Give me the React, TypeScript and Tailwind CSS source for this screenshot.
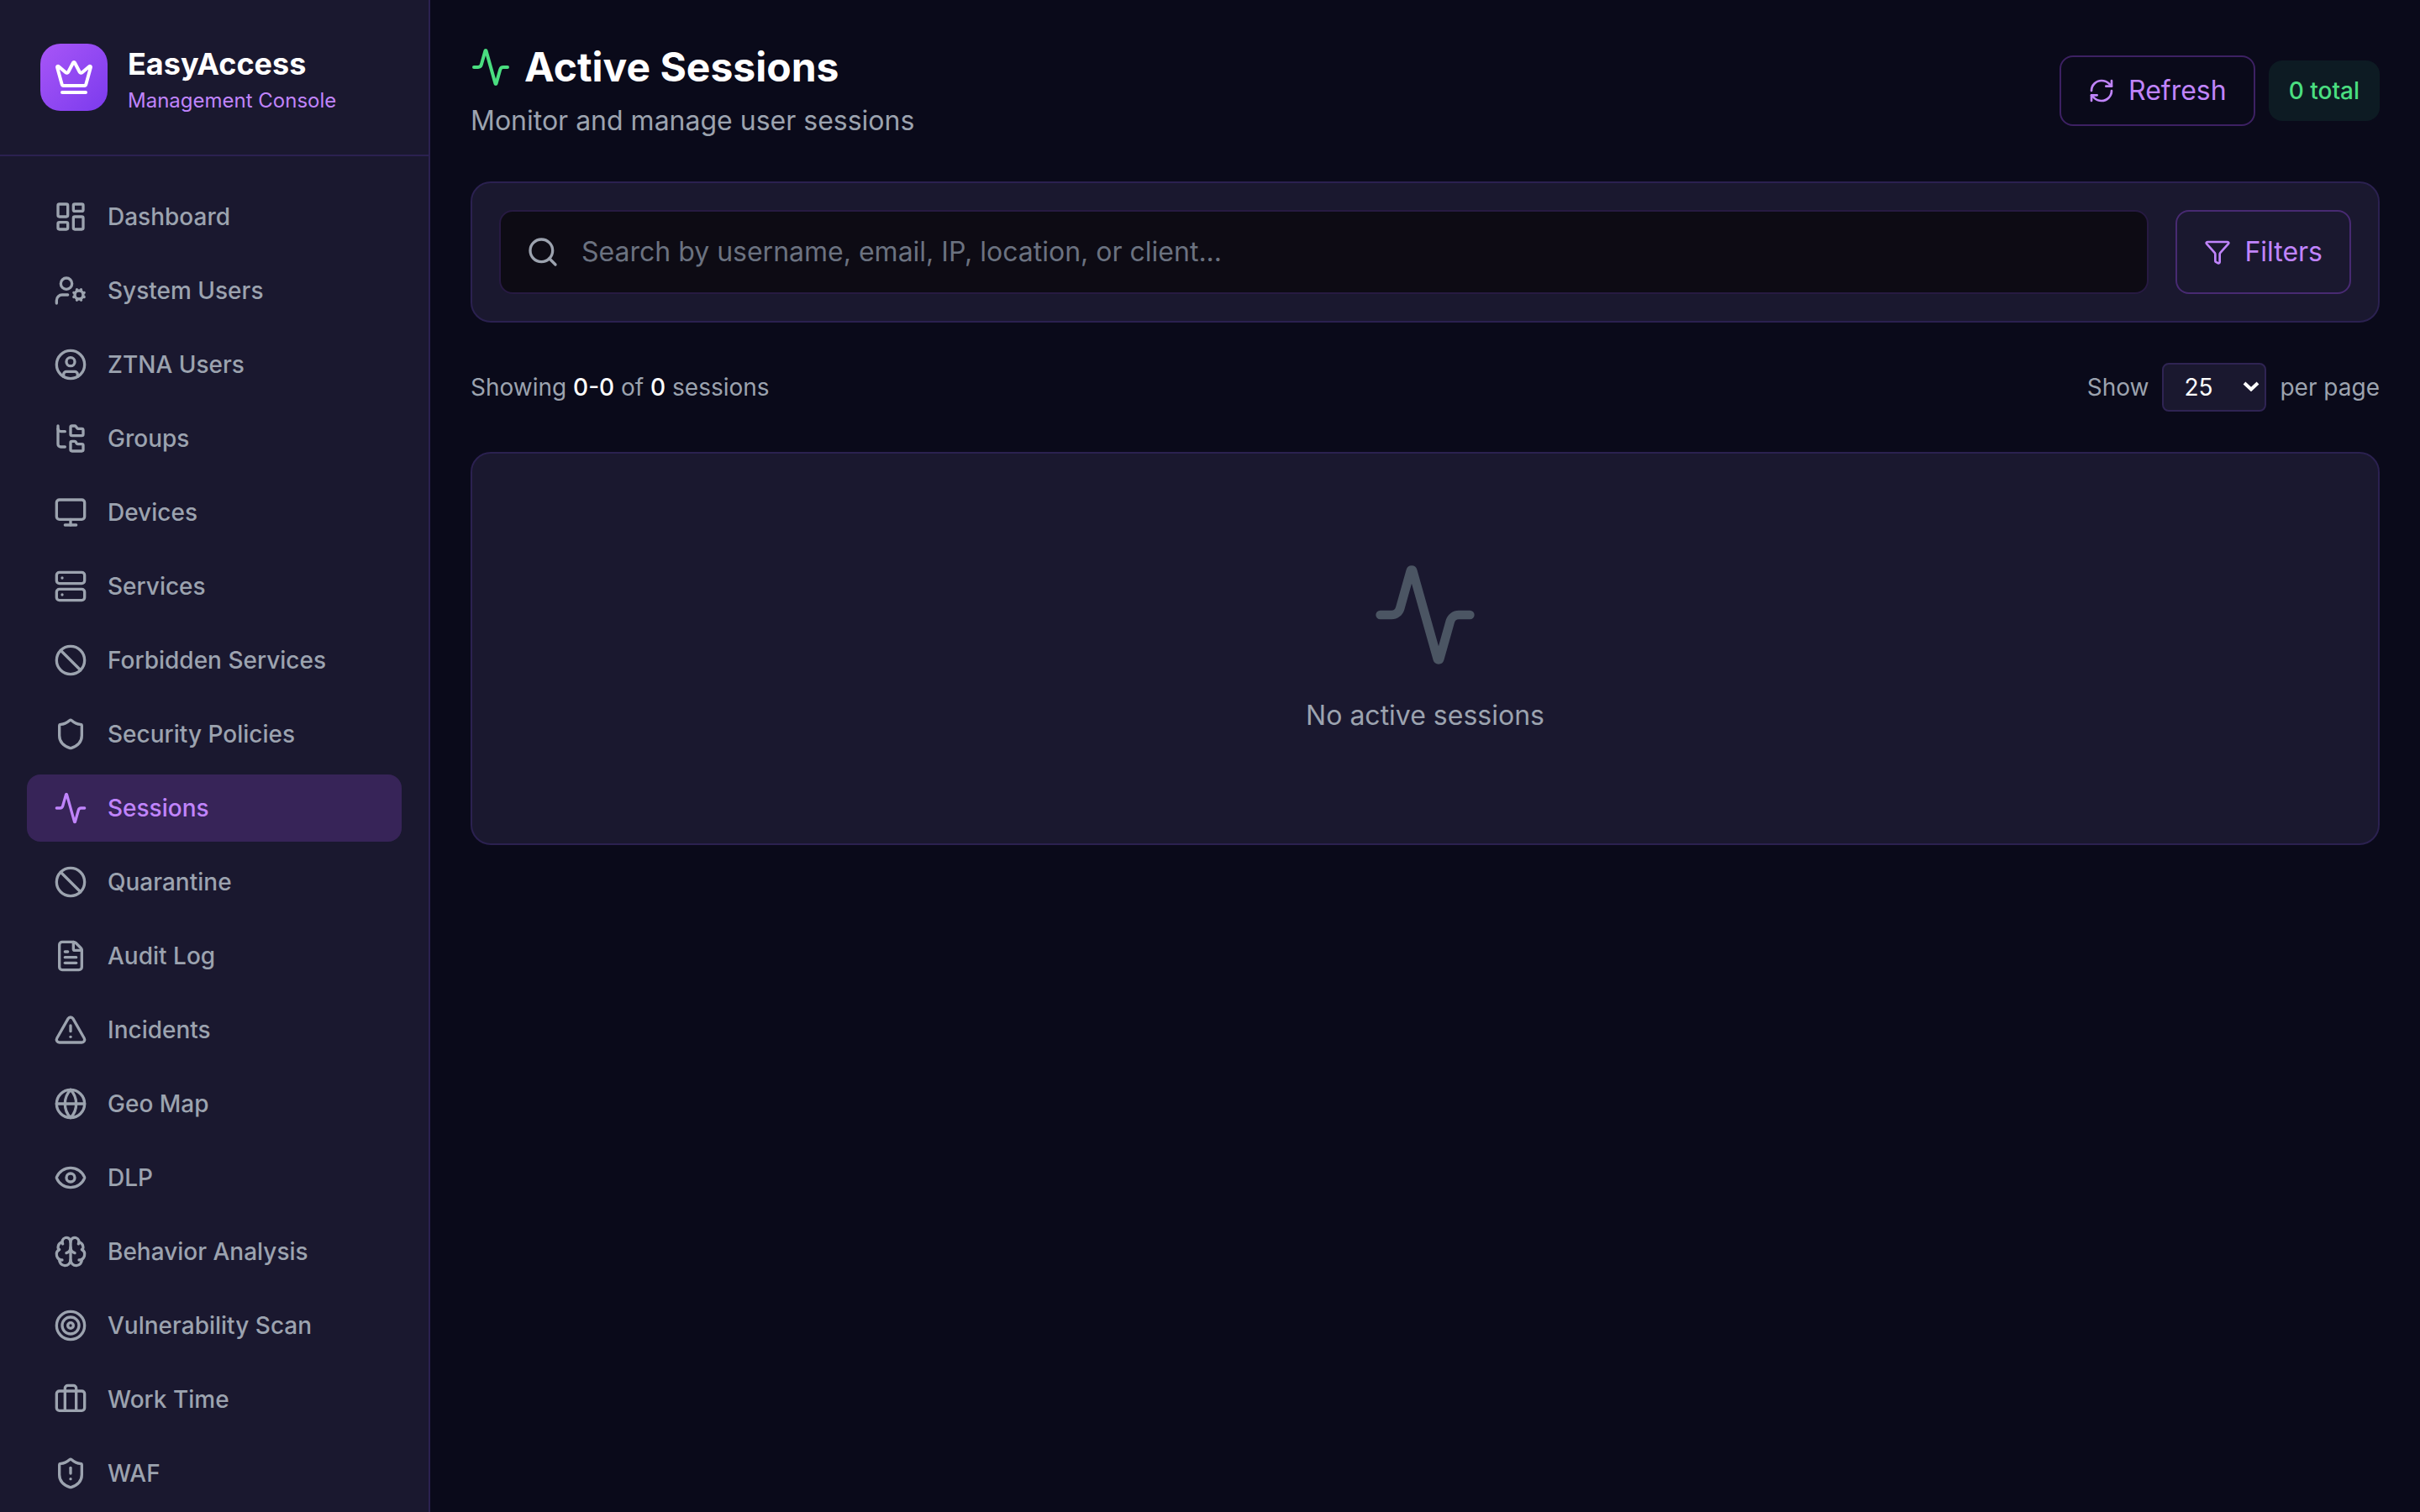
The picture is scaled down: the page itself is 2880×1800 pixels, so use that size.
import React from "react";
import {
  Activity,
  Ban,
  Brain,
  Briefcase,
  CircleUser,
  Crown,
  Eye,
  FileText,
  Filter,
  FolderTree,
  Globe,
  LayoutDashboard,
  Monitor,
  RefreshCw,
  Search,
  Server,
  Shield,
  ShieldAlert,
  Target,
  TriangleAlert,
  UserCog,
  type LucideIcon,
} from "lucide-react";

type NavEntry = { label: string; icon: LucideIcon; active?: boolean };

const NAV: NavEntry[] = [
  { label: "Dashboard", icon: LayoutDashboard },
  { label: "System Users", icon: UserCog },
  { label: "ZTNA Users", icon: CircleUser },
  { label: "Groups", icon: FolderTree },
  { label: "Devices", icon: Monitor },
  { label: "Services", icon: Server },
  { label: "Forbidden Services", icon: Ban },
  { label: "Security Policies", icon: Shield },
  { label: "Sessions", icon: Activity, active: true },
  { label: "Quarantine", icon: Ban },
  { label: "Audit Log", icon: FileText },
  { label: "Incidents", icon: TriangleAlert },
  { label: "Geo Map", icon: Globe },
  { label: "DLP", icon: Eye },
  { label: "Behavior Analysis", icon: Brain },
  { label: "Vulnerability Scan", icon: Target },
  { label: "Work Time", icon: Briefcase },
  { label: "WAF", icon: ShieldAlert },
];

function Sidebar() {
  return (
    <aside className="flex h-screen w-[512px] shrink-0 flex-col overflow-hidden border-r-2 border-[#2b2150] bg-[#1a182f]">
      <div className="flex shrink-0 items-center gap-6 border-b-2 border-[#2b2150] p-12">
        <div className="flex size-20 items-center justify-center rounded-3xl bg-linear-to-br from-[#a855f7] to-[#7c3aed]">
          <Crown className="size-12 text-white" />
        </div>
        <div>
          <div className="text-4xl leading-14 font-bold text-white">EasyAccess</div>
          <div className="text-2xl leading-8 text-[#c084fc]">Management Console</div>
        </div>
      </div>
      <nav aria-label="Main" className="flex flex-col gap-2 p-8">
        {NAV.map(({ label, icon: Icon, active }) => (
          <a
            key={label}
            href="#"
            aria-current={active ? "page" : undefined}
            className={
              active
                ? "flex items-center gap-6 rounded-2xl bg-[#372458] px-8 py-5 text-[28px] leading-10 font-medium text-[#c084fc]"
                : "flex items-center gap-6 rounded-2xl px-8 py-5 text-[28px] leading-10 font-medium text-[#9ca3af]"
            }
          >
            <Icon className="size-10 shrink-0" />
            <span>{label}</span>
          </a>
        ))}
      </nav>
    </aside>
  );
}

function PageHeader() {
  return (
    <header className="flex items-center justify-between">
      <div>
        <h1 className="flex items-center gap-4 text-5xl leading-16 font-bold text-white">
          <Activity className="size-12 text-[#4ade80]" />
          Active Sessions
        </h1>
        <p className="mt-2 text-[32px] leading-12 text-[#9ca3af]">Monitor and manage user sessions</p>
      </div>
      <div className="flex items-center gap-4">
        <button
          type="button"
          className="flex items-center gap-4 rounded-2xl border-2 border-[#3d2163] px-8 py-4 text-[32px] leading-12 text-[#c084fc]"
        >
          <RefreshCw className="size-8" />
          Refresh
        </button>
        <span className="rounded-2xl bg-[#0d1b23] px-6 py-4 text-[28px] leading-10 font-medium text-[#4ade80]">
          0 total
        </span>
      </div>
    </header>
  );
}

function SearchPanel() {
  return (
    <section className="flex gap-8 rounded-3xl border-2 border-[#2b2150] bg-[#1a182f] p-8">
      <div className="relative flex-1">
        <Search className="absolute top-1/2 left-8 size-10 -translate-y-1/2 text-[#9ca3af]" />
        <input
          type="text"
          aria-label="Search sessions"
          placeholder="Search by username, email, IP, location, or client..."
          className="w-full rounded-2xl border-2 border-[#271a42] bg-[#0d0b14] py-6 pr-8 pl-24 text-[32px] leading-12 text-white placeholder:text-[#6b7280]"
        />
      </div>
      <button
        type="button"
        className="flex items-center gap-4 rounded-2xl border-2 border-[#482a72] px-8 text-[32px] leading-12 text-[#c084fc]"
      >
        <Filter className="size-8" />
        Filters
      </button>
    </section>
  );
}

function ResultsBar() {
  return (
    <div className="flex items-center justify-between text-[28px] leading-10 text-[#9ca3af]">
      <p>
        Showing <span className="font-medium text-white">0-0</span> of{" "}
        <span className="font-medium text-white">0</span> sessions
      </p>
      <div className="flex items-center gap-4">
        <label htmlFor="page-size">Show</label>
        <div className="relative">
          <select
            id="page-size"
            defaultValue="25"
            className="block h-[58px] w-[124px] appearance-none rounded-lg border-2 border-[#2f2453] bg-[#1a182f] px-6 text-[28px] text-white"
          >
            <option>10</option>
            <option>25</option>
            <option>50</option>
            <option>100</option>
          </select>
          <svg
            viewBox="0 0 20 12"
            className="pointer-events-none absolute top-[22px] right-2 h-3 w-5"
            fill="none"
            stroke="white"
            strokeWidth="4"
            aria-hidden="true"
          >
            <path d="M2 2 L10 9.5 L18 2" />
          </svg>
        </div>
        <span>per page</span>
      </div>
    </div>
  );
}

function EmptyState() {
  return (
    <section className="flex flex-col items-center gap-8 rounded-3xl border-2 border-[#2b2150] bg-[#1a182f] py-32">
      <Activity className="size-32 text-[#4b5563]" />
      <p className="text-[32px] leading-12 text-[#9ca3af]">No active sessions</p>
    </section>
  );
}

export default function App() {
  return (
    <div className="flex min-h-screen bg-[#0a0a1a] font-['Inter',sans-serif]">
      <Sidebar />
      <main className="flex min-w-0 flex-1 flex-col gap-12 p-12">
        <PageHeader />
        <SearchPanel />
        <ResultsBar />
        <EmptyState />
      </main>
    </div>
  );
}
